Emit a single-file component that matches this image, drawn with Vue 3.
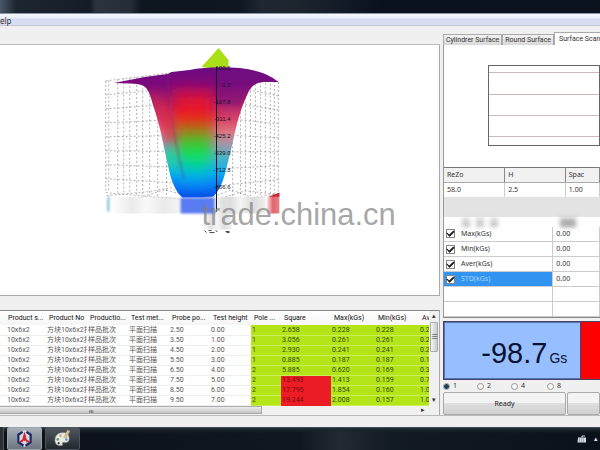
<script setup>
import { ref } from 'vue'

const tabs = ['Cylindrer Surface', 'Round Surface', 'Surface Scan']
const activeTab = ref('Surface Scan')
const pole = ref('1')
const stats = ref([
  { label: 'Max(kGs)', value: '0.00', on: true },
  { label: 'Min(kGs)', value: '0.00', on: true },
  { label: 'Aver(kGs)', value: '0.00', on: true },
  { label: 'STD(kGs)', value: '0.00', on: true, selected: true },
])
const columns = ['Product s...', 'Product No', 'Productio...', 'Test met...', 'Probe po...', 'Test height', 'Pole ...', 'Square', 'Max(kGs)', 'Min(kGs)', 'Aver']
const rows = [
  ['2.50', '0.00', '1', '2.658', '0.228', '0.228', '0.228'],
  ['3.50', '1.00', '1', '3.056', '0.261', '0.261', '0.261'],
  ['4.50', '2.00', '1', '2.930', '0.241', '0.241', '0.241'],
  ['5.50', '3.00', '1', '0.885', '0.187', '0.187', '0.187'],
  ['6.50', '4.00', '2', '5.885', '0.620', '0.169', '0.395'],
  ['7.50', '5.00', '2', '13.493', '1.413', '0.159', '0.786'],
  ['8.50', '6.00', '2', '17.795', '1.854', '0.160', '1.007'],
  ['9.50', '7.00', '2', '19.244', '2.008', '0.157', '1.083'],
].map((r) => ['10x6x2', '方块10x6x2打', '样品批次', '平面扫描', ...r])
const cellClass = (value, i) => ({
  pass: i >= 6,
  fail: i === 7 && Number(value) > 10,
})

const ticks = ['100.6', '-1.2', '-107.8', '-311.4', '-425.2', '-539.0', '-712.8', '-866.6']
const levels = [0, 1, 2, 3, 4, 5, 6, 7, 8]
const leftWall = levels.map((i) => `M106 ${81 + i * 14} L220 ${67 + i * 17}`)
const rightWall = levels.map((i) => `M279 ${82 + i * 14} L220 ${67 + i * 17}`)
const leftPosts = [106, 109, 118, 124, 130, 137, 143, 150, 158, 167]
const rightPosts = [233, 241, 246, 251, 256, 261, 266, 271, 275, 279]
</script>

<template>
  <div class="desktop">
    <div class="wall"></div>
    <nav class="menubar"><button type="button">Help</button></nav>
    <main class="work">
      <section class="left">
        <div class="toolbar"></div>
        <div class="plot">
          <svg viewBox="0 45 440 251" role="img" aria-label="Surface field plot">
            <defs>
              <linearGradient id="base" x1="0" y1="66" x2="0" y2="200" gradientUnits="userSpaceOnUse">
                <stop offset="0" stop-color="#6a0b82" />
                <stop offset=".14" stop-color="#7d0a7c" />
                <stop offset=".27" stop-color="#a81c6c" />
                <stop offset=".4" stop-color="#d84468" />
                <stop offset=".49" stop-color="#dc7482" />
                <stop offset=".58" stop-color="#a894a8" />
                <stop offset=".68" stop-color="#52b2c6" />
                <stop offset=".8" stop-color="#08aef0" />
                <stop offset=".91" stop-color="#0874f4" />
                <stop offset="1" stop-color="#0644e4" />
              </linearGradient>
              <linearGradient id="core" x1="0" y1="80" x2="0" y2="192" gradientUnits="userSpaceOnUse">
                <stop offset="0" stop-color="#c00860" stop-opacity="0" />
                <stop offset=".16" stop-color="#d8143c" />
                <stop offset=".32" stop-color="#f41a18" />
                <stop offset=".42" stop-color="#b85a18" />
                <stop offset=".53" stop-color="#48b81c" />
                <stop offset=".66" stop-color="#0ce44c" />
                <stop offset=".76" stop-color="#04d4a0" />
                <stop offset=".9" stop-color="#00a8f0" stop-opacity=".5" />
                <stop offset="1" stop-color="#0090ff" stop-opacity="0" />
              </linearGradient>
              <linearGradient id="fade" x1="0" y1="0" x2="1" y2="0">
                <stop offset="0" stop-color="#ddd" stop-opacity="0" />
                <stop offset=".3" stop-color="#ddd" />
                <stop offset=".5" stop-color="#f4f4f4" />
                <stop offset=".75" stop-color="#dcdcdc" />
                <stop offset="1" stop-color="#eee" />
              </linearGradient>
              <linearGradient id="ember" x1="0" y1="0" x2="1" y2="0">
                <stop offset="0" stop-color="#e46a72" stop-opacity=".1" />
                <stop offset=".5" stop-color="#e4626a" />
                <stop offset="1" stop-color="#e4828a" />
              </linearGradient>
              <clipPath id="bowl">
                <path d="M114 83 L145 77 L168 74 L172 72 L190 70 Q210 66 240 68 Q266 71 279 82 L265 82 Q255 82 250 90 Q241 108 236 130 Q231 154 226 172 Q221 192 212 198 H183 Q175 191 171 177 Q167 160 163 141 Q159 121 153 104 Q149 87 142 85 Q134 83 114 83Z" />
              </clipPath>
              <filter id="soft" x="-50%" y="-50%" width="200%" height="200%"><feGaussianBlur stdDeviation="6" /></filter>
              <filter id="haze"><feGaussianBlur stdDeviation="1" /></filter>
            </defs>
            <g class="grid">
              <path v-for="d in leftWall" :key="d" :d="d" />
              <path v-for="d in rightWall" :key="d" :d="d" />
              <path v-for="x in leftPosts" :key="x" :d="`M${x} ${81 - (x - 106) / 8} V${192 + (x - 106) / 10}`" />
              <path v-for="x in rightPosts" :key="x" :d="`M${x} ${82 - (279 - x) / 4} V${194 + (279 - x) / 12}`" />
              <path d="M107 196 L148 192 L172 188 L184 198 M140 198 L165 190 L190 197 M214 197 L232 190 L250 197 M226 197 L246 191 L279 195" />
            </g>
            <path d="M219 48 L229 60 L229 70 L202 67Z" fill="#a9df16" />
            <g clip-path="url(#bowl)">
              <path d="M100 60 H290 V200 H100Z" fill="url(#base)" />
              <path d="M148 94 Q170 94 182 140 L170 146 Q160 120 148 94Z" fill="#d8284c" opacity=".8" filter="url(#soft)" />
              <ellipse cx="170" cy="158" rx="6" ry="12" fill="#14d898" filter="url(#soft)" />
              <path d="M172 80 H214 Q214 135 208 192 H184 Q174 135 172 80Z" fill="url(#core)" opacity=".9" filter="url(#soft)" />
              <path d="M184 100 H206 L203 165 H188Z" fill="url(#core)" opacity=".6" filter="url(#soft)" />
              <path d="M168 74 Q170 120 184 178" stroke="#78306a" stroke-width="2" opacity=".35" fill="none" filter="url(#haze)" />
              <path d="M218 68 H280 V84 H250 L240 106 H218Z" fill="#6f1580" opacity=".35" filter="url(#haze)" />
            </g>
            <path d="M107 199 L110 195 V212 H107Z" fill="#4bb0c8" opacity=".6" filter="url(#haze)" />
            <path d="M111 197 H148 V214 H111Z M148 197 H182 V214 H148Z" fill="url(#fade)" opacity=".6" />
            <path d="M203 197 H232 V230 H203Z" fill="url(#fade)" opacity=".9" />
            <path d="M216 197 H266 V214 H216Z" fill="url(#fade)" />
            <path d="M181 198 H215 V214 H181Z" fill="#5a7bf2" filter="url(#haze)" />
            <path d="M267 198 L280 193 V214 H267Z" fill="url(#ember)" />
            <path d="M269 197 L280 193 V197Z" fill="#cf2434" />
            <path d="M217 67 V212" stroke="#161628" stroke-width="1" />
            <path d="M205 231 l2 2 m2 -2 h3 m-2 2 h5 m1 -2 l2 1 m8 0 h4 m-3 1 h3" stroke="#444" fill="none" />
            <text v-for="(t, i) in ticks" :key="t" x="231" :y="70 + i * 17" text-anchor="end" class="tick">{{ t }}</text>
            <text x="202" y="225" class="mark">trade.china.cn</text>
          </svg>
        </div>
        <div class="spacer"></div>
        <div class="records">
          <div class="viewport">
            <table>
              <colgroup>
                <col v-for="(c, i) in columns" :key="c" :class="'c' + i" />
              </colgroup>
              <thead>
                <tr><th v-for="c in columns" :key="c" scope="col">{{ c }}</th></tr>
              </thead>
              <tbody>
                <tr v-for="(r, n) in rows" :key="n">
                  <td v-for="(v, i) in r" :key="i" :class="cellClass(v, i)">{{ v }}</td>
                </tr>
              </tbody>
            </table>
            <div class="hbar"><span class="thumb">ııı</span><span class="arrow">▸</span></div>
          </div>
          <div class="vbar"><span>▴</span><span class="thumb">≡</span><span class="down">▾</span></div>
        </div>
      </section>

      <section class="right">
        <div class="tabs" role="tablist">
          <button v-for="t in tabs" :key="t" type="button" role="tab" :aria-selected="t === activeTab" :class="{ active: t === activeTab }" @click="activeTab = t">{{ t }}</button>
        </div>
        <div class="page">
          <div class="profile"><i></i><i></i><i></i><i></i></div>
          <table class="params">
            <thead><tr><th scope="col">ReZo</th><th scope="col">H</th><th scope="col">Spac</th></tr></thead>
            <tbody><tr><td>58.0</td><td>2.5</td><td>1.00</td></tr></tbody>
          </table>
          <div class="band"></div>
          <div class="smudge"><i></i><i></i><i></i><b></b></div>
          <table class="stats">
            <tbody>
              <tr v-for="s in stats" :key="s.label" :class="{ selected: s.selected }">
                <td><label><input v-model="s.on" type="checkbox" />{{ s.label }}</label></td>
                <td>{{ s.value }}</td>
              </tr>
              <tr><td></td><td></td></tr>
              <tr><td></td><td></td></tr>
            </tbody>
          </table>
        </div>
        <div class="readout">
          <div class="value"><strong>-98.7</strong><span>Gs</span></div>
          <div class="alarm"></div>
        </div>
        <div class="poles">
          <label v-for="p in ['1', '2', '4', '8']" :key="p"><input v-model="pole" type="radio" name="pole" :value="p" />{{ p }}</label>
        </div>
        <div class="actions">
          <button type="button">Ready</button>
          <button type="button" aria-label="Stop"></button>
        </div>
      </section>
    </main>
    <div class="status"></div>
    <footer class="taskbar">
      <span class="stub"></span>
      <button type="button" class="task open" aria-label="Magnet scanner">
        <svg viewBox="0 0 20 20">
          <path d="M10 1 L17 5 L18 14 L10 19 L2 14 L3 5Z" fill="#d8dbe6" />
          <path d="M8 3 L3.500 6 V14 L9 17.500 M12 3 L16.500 6 V14 L11 17.500" fill="none" stroke="#1c2a66" stroke-width="2.400" />
          <path d="M10 3 L12 9 L8 9Z M9 10 L8 14 L3.500 14Z M11 10 L16.500 14 L12 14Z" fill="#d3202c" />
          <circle cx="10" cy="10.500" r="2.200" fill="#c92632" />
        </svg>
      </button>
      <button type="button" class="task" aria-label="Paint">
        <svg viewBox="0 0 20 20">
          <path d="M2 12 Q2 5 9 4 Q17 3 17 10 Q17 15 11 14 Q9 14 10 17 Q3 19 2 12Z" fill="#e6e9e2" stroke="#9aa39c" stroke-width=".6" />
          <path d="M11 9 L15 1 L18 2 L14 10Z" fill="#cdb98c" />
          <circle cx="5" cy="11" r="1.400" fill="#58a068" />
          <circle cx="8" cy="7" r="1.300" fill="#c8a35a" />
          <circle cx="14" cy="11" r="1.300" fill="#6b93c0" />
          <circle cx="6" cy="15" r="1.200" fill="#444" />
        </svg>
      </button>
      <div class="tray">
        <svg viewBox="0 0 10 8"><path d="M5 2.500 V1 H8" stroke="#ccc" fill="none" /><path d="M1 2.500 H9 V7.500 H0.500Z" fill="#d4d8dc" /><path d="M2 4 H8 M2 6 H8" stroke="#7b8188" stroke-dasharray="1 1" /></svg>
        <span>▴</span>
      </div>
    </footer>
  </div>
</template>

<style>
body { margin: 0; }
</style>

<style scoped>
* { box-sizing: border-box; }
.desktop {
  min-height: 100vh;
  display: flex;
  flex-direction: column;
  overflow: hidden;
  background: #f0f0f0;
  color: #333;
  font: 7px/10px "Noto Sans", "Noto Sans CJK SC", sans-serif;
}
button { font: inherit; color: inherit; margin: 0; }
.wall {
  height: 13px;
  background: linear-gradient(90deg, #4a5868 0, #1c2631 16px, #141c27 90px, #2b333e 96px, #252d38 130px, #0d151f 142px, #0e1722 240px, #1f2832 262px, #1c242e 300px, #0a1220 380px, #0a131e 100%);
}
.menubar {
  height: 13px;
  padding-top: 2px;
  display: flex;
  border-top: 1px solid #8b96a4;
  border-bottom: 1px solid #c4c8d8;
  background: linear-gradient(#f4f8fd 0, #eceffa 4px, #d8dcf2 5px, #dadef3 100%);
}
.menubar button { margin-left: -6px; padding: 0; border: 0; background: none; line-height: 9px; font-size: 8px; }
.work { display: grid; grid-template-columns: minmax(0, 11fr) minmax(0, 4fr); }
.left { display: flex; flex-direction: column; min-width: 0; }
.toolbar { height: 19px; border-bottom: 1px solid #bbb; }
.plot { background: #fff; border-right: 1px solid #aaa; border-bottom: 1px solid #aaa; }
.plot svg { display: block; width: 100%; height: auto; overflow: visible; }
.grid { fill: none; stroke: #666; stroke-width: .5; stroke-dasharray: 2 2; }
.tick { font: 6px "Liberation Sans", sans-serif; fill: #141424; }
.mark { font: 31px "Liberation Sans", sans-serif; fill: #808080; fill-opacity: .7; }
.spacer { height: 14px; }
.records { display: flex; background: #fff; border-top: 1px solid #888; border-right: 1px solid #aaa; font-family: Roboto, "Noto Sans CJK SC", sans-serif; }
.viewport { flex: 1; min-width: 0; overflow: hidden; }
table { border-collapse: collapse; table-layout: fixed; width: 100%; }
th, td { padding: 0; text-align: left; overflow: hidden; white-space: nowrap; }
th { font-weight: 400; }
.records th { height: 14px; padding-left: 3px; color: #111; background: linear-gradient(#fff, #f5f5f5); }
.records th:first-child { padding-left: 8px; }
.records td { height: 10px; line-height: 9px; padding-left: 1px; border-bottom: 1px solid #eee; color: #555; }
.records td:first-child { padding-left: 7px; }
.records td.pass { background: #b3e518; border-bottom-color: #c9ee5c; color: #38480c; }
.records td.fail { background: #eb1c24; border-bottom-color: #eb1c24; color: #7c0c10; }
.c0 { width: 46px; }
.c1, .c2, .c3, .c4, .c5 { width: 41px; }
.c6 { width: 30px; }
.c7 { width: 50px; }
.c8, .c9 { width: 44px; }
.hbar { height: 9px; display: flex; justify-content: space-between; align-items: center; background: #f1f1f1; }
.hbar .thumb { width: 61%; height: 8px; padding-right: 78px; text-align: center; line-height: 7px; font-size: 6px; background: linear-gradient(#ececec, #c6c6c6); border: 1px solid #aaa; border-left: 0; }
.hbar .arrow { padding-right: 4px; }
.vbar { width: 10px; display: flex; flex-direction: column; align-items: center; background: #f0f0f0; line-height: 11px; }
.vbar .thumb { width: 8px; height: 30px; line-height: 28px; text-align: center; border: 1px solid #aaa; border-radius: 1px; background: linear-gradient(90deg, #f4f4f4, #ccc); }
.vbar .down { margin-top: auto; margin-bottom: 9px; }
.right { display: flex; flex-direction: column; padding-left: 3px; min-width: 0; overflow: hidden; }
.tabs { height: 19px; padding-top: 6px; display: flex; align-items: flex-end; overflow: hidden; flex: none; font-family: Roboto, sans-serif; }
.tabs button { flex: none; height: 11px; padding: 0 2px; border: 1px solid #aaa; border-bottom: 0; background: linear-gradient(#f2f2f2, #d8d8d8); line-height: 10px; }
.tabs .active { height: 13px; background: #fff; padding: 0 4px; }
.page { background: #fff; border-left: 1px solid #999; border-bottom: 1px solid #888; padding-top: 20px; }
.profile { margin-left: 44px; height: 81px; border: 1px solid #666; display: grid; grid-template-rows: 7px 22px 21px 21px; }
.profile i { border-bottom: 1px solid #ceb8b8; }
.params { margin-top: 21px; border-top: 1px solid #777; }
.params th { height: 15px; padding-left: 3px; background: #f1f1f1; border-right: 1px solid #888; border-bottom: 1px solid #aaa; }
.params td { height: 14px; padding-left: 3px; border-right: 1px solid #ccc; }
.params th:nth-child(-n+2) { width: 39%; }
.band { height: 20px; background: #e3e3e3; }
.smudge { height: 10px; padding-left: 18px; display: flex; gap: 6px; filter: blur(2px); }
.smudge i { width: 8px; background: linear-gradient(#e4e4e4, #bbb); }
.smudge b { width: 16px; margin-left: 56px; background: linear-gradient(#ccc, #999); }
.stats td { height: 15px; padding-left: 3px; border-bottom: 1px solid #ccc; border-right: 1px solid #ccc; }
.stats td:first-child { width: 70%; padding-left: 2px; }
.stats label { display: flex; align-items: center; gap: 6px; height: 14px; }
.stats input { appearance: none; width: 9px; height: 9px; margin: 0; border: 1px solid #888; background: #fff; display: grid; place-items: center; }
.stats input:checked::after { content: ""; width: 6px; height: 3px; margin-bottom: 2px; border-left: 1px solid #111; border-bottom: 2px solid #222; transform: rotate(-45deg); }
.stats .selected td:first-child { background: #3094f0; color: #a8d4fb; }
.readout { margin-top: 3px; height: 59px; display: grid; grid-template-columns: 88fr 12fr; background: #f00; border: 1px solid #446; border-right: 0; }
.value { display: flex; justify-content: flex-end; align-items: baseline; gap: 2px; padding: 10px 13px 0 0; background: #97beff; border: 1px solid #5474b4; border-right-color: #446; color: #0a1230; font-family: "Liberation Sans", sans-serif; overflow: hidden; }
.value strong { font-size: 29px; line-height: 40px; font-weight: 400; }
.value span { font-size: 14px; }
.poles { height: 12px; display: grid; grid-template-columns: 34px 34px 36px 1fr; align-items: center; }
.poles label { display: flex; align-items: center; gap: 3px; }
.poles input { appearance: none; width: 7px; height: 7px; margin: 0; border: 1px solid #999; border-radius: 50%; background: #f8f8f8; }
.poles input:checked { background: radial-gradient(#1c4458 0 2px, #a8c4cc 3px); }
.actions { display: grid; grid-template-columns: 123px 1fr; gap: 1px; }
.actions button { height: 23px; padding: 0; border: 1px solid #aaa; border-radius: 2px; background: linear-gradient(#f3f3f3 0 48%, #dedede 50%, #d0d0d0); color: #222; }
.status { min-height: 11px; border-top: 1px solid #bbb; background: #f0f0f0; flex: 1; }
.taskbar { height: 23px; display: flex; gap: 3px; align-items: stretch; background: linear-gradient(#46525e 0, #1c252e 2px, transparent 6px), linear-gradient(90deg, #0c1117 0, #10171f 300px, #232a32 340px, #121a22 390px, #0b1118 100%); }
.stub { width: 4px; background: #2b3036; border-right: 1px solid #555; }
.task { width: 35px; padding: 0; border: 1px solid #4c535a; border-radius: 2px; background: linear-gradient(#50575e, #22282e); display: grid; place-items: center; }
.task.open { background: linear-gradient(#a8afb8, #6c757f); border-color: #9aa2aa; }
.task svg { width: 19px; height: 19px; }
.tray { margin-left: auto; display: flex; align-items: center; gap: 7px; padding-right: 2px; color: #ddd; }
.tray svg { width: 10px; height: 8px; }
</style>
